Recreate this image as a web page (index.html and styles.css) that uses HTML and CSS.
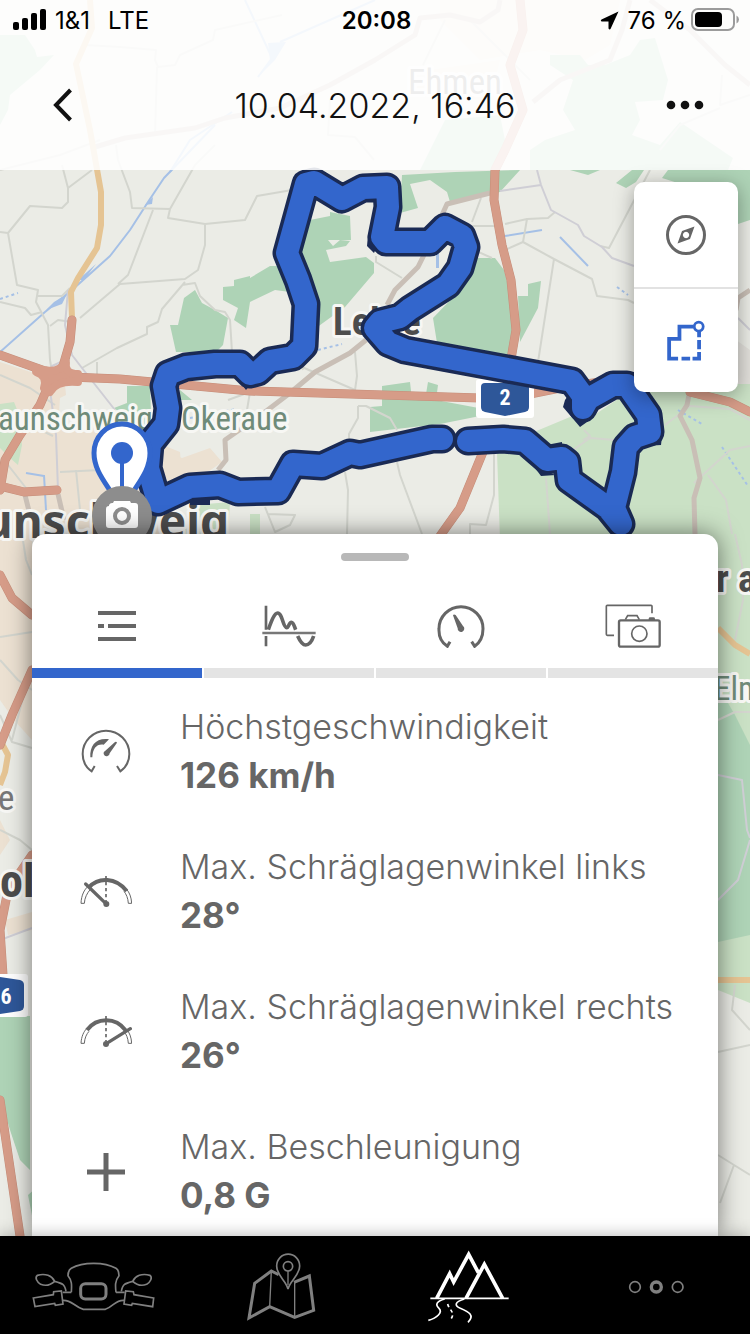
FILE: index.html
```html
<!DOCTYPE html>
<html lang="de">
<head>
<meta charset="utf-8">
<meta name="viewport" content="width=device-width, initial-scale=1">
<title>10.04.2022, 16:46</title>
<link rel="stylesheet" href="styles.css">
</head>
<body>
<div class="screen">
  <svg class="map" viewBox="0 0 750 1334" preserveAspectRatio="xMidYMin slice" role="img" aria-label="Karte mit aufgezeichneter Route">
    <!-- settlements -->
    <g class="town">
      <path d="M0 362 L40 375 L65 385 L66 395 L60 398 L58 428 L85 432 L88 415 L120 440 L150 440 L180 452 L182 474 L160 480 L160 534 L0 540Z"/>
      <path d="M162 450 L182 458 L210 448 L222 462 L205 474 L168 484Z"/>
      <path d="M0 534 L32 534 V740 L14 720 L0 700Z"/>
      <path d="M0 820 L10 840 L0 855Z M5 920 L32 912 V930 L8 935Z"/>
      <path d="M440 0 L620 0 L610 45 L585 60 L540 50 L480 60 L440 20Z M430 70 L500 60 L490 100 L410 96Z"/>
      <path d="M718 400 L735 385 L750 384 V350 L736 340Z" class="built"/>
    </g>
    <!-- light woodland -->
    <g class="wood-light">
      <path d="M534 432 L570 417 L590 418 L640 384 L750 384 V540 H500 L497 452Z"/>
      <path d="M195 505 L230 502 L228 534 H180Z M250 514 h10 v20 h-10Z"/>
      <path d="M0 404 L14 402 L18 412 L22 445 L18 465 L10 458 L0 448Z"/>
      <path d="M700 534 H750 V1003 L718 990Z"/>
    </g>
    <!-- woodland -->
    <g class="wood">
      <path d="M0 35 L25 35 L35 50 L37 57 L54 55 L40 70 L10 95 L8 110 L0 125Z"/>
      <path d="M550 55 L580 55 L588 65 L605 65 L630 55 L640 40 L655 38 L668 80 L663 100 L635 102 L640 120 L632 135 L660 145 L680 122 L733 158 L728 170 H530 V150 L545 140 L575 130 L563 110 L573 80 L550 65Z"/>
      <path d="M445 120 L500 115 L505 140 L498 170 H420 L430 150Z"/>
      <path d="M170 325 L178 325 L184 298 L195 290 L202 303 L215 310 L228 318 L223 345 L216 352 H176Z"/>
      <path d="M223 287 L234 286 V280 L250 276 V302 L246 328 L234 320 L238 308 L223 300Z"/>
      <path d="M250 278 L270 266 L292 266 L310 220 L330 216 V212 L350 216 L351 240 L328 240 L333 246 L340 240 L350 241 L346 246 L326 250 L330 262 L366 257 L374 263 L374 273 L345 307 L316 328 L305 322 L290 292 L275 290 L250 302Z"/>
      <path d="M127 386 L150 386 L152 440 L130 420 L114 408 L127 403Z M180 390 L192 400 L180 400Z"/>
      <path d="M402 175 L455 172 L520 170 L500 192 L450 202 L447 192 L430 180 L410 184 L418 208 L400 213Z"/>
      <path d="M475 258 L495 258 L504 270 L512 300 L512 356 L500 360 L437 343 L433 318 L460 290Z M518 296 L528 296 L528 284 L541 281 L538 308 L520 342Z"/>
      <path d="M382 386 L410 382 L412 400 L425 400 L428 382 L438 385 L436 400 L500 412 L485 415 L440 424 L370 432 L370 407 L382 406Z"/>
      <path d="M616 183 L632 170 L644 170 L636 182 L626 188Z M570 170 H600 L588 175Z M662 178 L668 170 H750 V220 L738 224 L700 190Z"/>
      <path d="M718 686 L735 715 L750 745 V935 L718 942Z"/>
      <path d="M0 1016 L30 1016 V1170 L20 1160 L10 1130 L0 1096Z M28 1195 L36 1188 V1236Z"/>
    </g>
    <!-- water -->
    <g class="water">
      <path d="M0 352 L45 312 L72 290 L110 256 L130 230 L148 202 L164 178 L215 125"/>
      <path d="M170 172 L190 140 L232 112 M258 77 L272 58 L245 0 M280 42 L375 0 M560 237 L588 266 M26 473 L44 476 M44 475 L46 510 M505 236 L542 230"/>
      <path class="dashed" d="M722 447 L748 486 M678 410 L702 424 M318 350 L342 344 M0 299 L18 293 M617 287 L628 295 M190 418 L236 409"/>
      <path class="fill" d="M268 43 L286 42 L275 60 L258 77 L270 60Z M54 302 L67 294 L62 304 L46 310Z M145 205 L153 197 L152 204Z M78 280 L96 264 L84 280Z M436 252 h3 v16 h-3Z"/>
    </g>
    <!-- minor roads -->
    <g class="lane">
      <path d="M0 232 L8 233 L30 206 L62 208 L68 202 V188 L92 170 M68 188 L62 165 M8 233 L17 285 L38 290 L36 302 L48 325 L50 360 L52 372 M38 296 L62 296 L70 288 M0 302 L25 308 L31 315 L42 312 M50 326 L58 320 L72 322"/>
      <path d="M80 318 L120 284 L185 279 L198 270 L205 245 V224 L168 218 L170 209 L132 208 L130 192 L118 160 L116 145 M170 209 L195 165 L215 145 M205 224 L245 220 L257 196 L292 190 M153 210 L128 275 L118 284 M185 282 L162 309 L158 322 L147 327 V334 L117 348 L82 368 M97 362 V375 M182 285 L195 283 L200 296 L215 310 L225 312 L230 320 L232 352"/>
      <path d="M0 375 L30 388 L55 405 M30 425 L53 436 M60 472 L100 470 M76 470 L80 510 M8 465 L26 488 M228 400 L250 392 L247 410"/>
      <path d="M376 256 L376 262 L402 278 M303 370 L302 367 L355 390 L357 376 L355 352 M358 406 L366 406 L390 418 L397 430 M358 406 L358 418 L349 434 V442 M345 472 L348 490 L347 534 M397 462 L400 475 L422 534 M265 507 L275 532 L290 525 L295 515 L268 514 M494 450 V495 L486 525 L470 524 V534 M470 226 L495 226 M472 222 L481 198 M474 250 L492 258"/>
      <path d="M505 224 L527 219 L548 218 L555 212 M527 219 L523 242 L505 250 M523 242 L554 259 L592 279 L597 296 L628 300 L634 303 M554 259 L538 362 M600 246 L609 248 L650 170 M583 440 L590 436 L584 430 M573 450 L590 438 L615 440 M546 478 L550 534 M665 425 L690 406 L730 409 L750 420 M694 483 L730 450 L750 446 M708 475 L726 500 L732 534"/>
      <path d="M85 45 L120 47 L156 50 L155 60 L158 67 L175 65 L180 55 L213 40 L215 30 L282 15 M0 170 L60 155 L100 140 M157 67 L155 135 M330 100 L328 135 L355 137 L374 160 M423 65 L445 20 M470 20 L510 60 L530 80 M722 75 L720 105 L750 95 M660 150 L680 125 L720 108"/>
      <path d="M22 534 L26 560 L32 575 M0 660 L18 680 L32 690 M0 637 L32 632 M0 715 L12 742 L32 748 M0 830 L20 840 L32 850 M12 740 L25 690 M735 534 L742 565 L743 600 L735 640 M718 720 L735 712 H750 M735 985 L732 1010 L750 1030 M718 1052 L750 1045 M718 1155 L734 1165 L720 1203 M734 1165 L750 1175"/>
    </g>
    <g class="lane lilac">
      <path d="M500 191 L541 185 L551 210 L578 225 L584 236 L602 247 L612 258 L634 266 M541 185 L537 170 M738 318 L750 330 M68 290 L65 325 L72 355 L82 368 L115 410 M70 358 L52 366 L50 390 L56 435 L58 490 M718 775 L742 780 L747 830 L750 838 M750 840 L738 880 L718 900 M0 940 L32 928"/>
    </g>
    <!-- district roads -->
    <g class="road">
      <path d="M95 147 L125 138 L195 128 L225 118 L280 108 L330 85 L375 60 L415 35 L420 18 L450 15 L480 22 L498 10 L500 0 M533 102 L560 80 L610 60 L622 30 L630 0 M650 0 L690 30 L725 65 L750 85"/>
      <path d="M490 193 L447 204 L442 215 M424 255 L418 267 L395 290 L387 305 M366 340 L350 353 L315 372 L290 393 L265 412 L225 440 L226 460 L218 470 M690 390 L687 405 L680 416 L692 440 L700 478 L694 498 L695 534 M750 290 L738 298 L736 310 M25 495 L30 515 M58 494 L64 520"/>
    </g>
    <g class="main">
      <path d="M90 0 L92 28 L76 64 L90 130 L101 192 V225 L97 248 L78 278 L71 292 L72 318"/>
      <path d="M718 628 L735 645 L750 654 M718 980 H750 M0 740 L8 755 L5 772 L0 785"/>
    </g>
    <g class="motorway-edge">
      <path d="M0 355 L45 371 L70 377 L120 379 L250 391 L480 398 M525 395 L560 388 L640 376 M690 392 L730 402 L750 412"/>
      <path d="M72 320 L70 342 L63 366 L50 382 L40 405 L20 435 L5 460 L0 490 M0 486 L24 492 L57 490 M520 0 L523 30 L510 65 L523 110 L505 150 L495 170 L494 200 L502 245 L511 280 L516 330 L510 365 M492 430 L460 508 L440 536"/>
      <path d="M0 575 L12 598 L32 615 M32 670 L12 715 L0 745 M32 855 L8 890 L0 930 L3 975 M0 1100 L20 1236"/>
    </g>
    <g class="motorway">
      <path d="M0 355 L45 371 L70 377 L120 379 L250 391 L480 398 M525 395 L560 388 L640 376 M690 392 L730 402 L750 412"/>
      <path d="M72 320 L70 342 L63 366 L50 382 L40 405 L20 435 L5 460 L0 490 M0 486 L24 492 L57 490 M520 0 L523 30 L510 65 L523 110 L505 150 L495 170 L494 200 L502 245 L511 280 L516 330 L510 365 M492 430 L460 508 L440 536"/>
      <path d="M0 575 L12 598 L32 615 M32 670 L12 715 L0 745 M32 855 L8 890 L0 930 L3 975 M0 1100 L20 1236"/>
      <path class="junction" d="M66 362 Q64 374 78 374 V382 Q56 380 50 392 L44 388 Q48 376 36 372 V368 Q58 376 66 362Z"/>
    </g>
    <!-- place names -->
    <g class="place">
      <text x="408" y="94" class="village">Ehmen</text>
      <text x="-2" y="430" class="nature">aunschweiger</text>
      <text x="181" y="430" class="nature">Okeraue</text>
      <text x="229" y="538" class="city wide" text-anchor="end">unschweig</text>
      <text x="333" y="335" class="suburb">Lehre</text>
      <text x="716" y="592" class="suburb">r a</text>
      <text x="714" y="700" class="nature">Elm</text>
      <text x="-2" y="810" class="village">e</text>
      <text x="0" y="897" class="city">ol</text>
    </g>
    <!-- motorway shields -->
    <g>
      <rect class="shield-back" x="476" y="379" width="58" height="39" rx="3"/>
      <path class="shield" d="M485 383 H525 Q529 383 529 387 V407 Q529 411 525 412 L505 416 L485 412 Q481 411 481 407 V387 Q481 383 485 383Z"/>
      <text x="505" y="405" class="shield-text" text-anchor="middle">2</text>
      <rect class="shield-back" x="-30" y="974" width="58" height="43" rx="3"/>
      <path class="shield" d="M0 977 L20 980 Q24 981 24 985 V1006 Q24 1010 20 1011 L0 1014Z"/>
      <text x="6" y="1004" class="shield-text" text-anchor="middle">6</text>
    </g>
    <!-- recorded route -->
    <path class="route-edge" d="M442 439 L432 439 L360 455 L350 453 L322 466 L293 464 L278 491 L238 492 L220 485 L190 487 L158 502 L148 468 L150 444 L166 424 L168 408 L164 386 L168 374 L186 367 L215 364 L240 364 L250 374 L258 372 L270 361 L293 357 L304 346 L306 304 L298 280 L287 253 L306 184 L314 182 L342 199 L363 188 L387 187 L388 207 L382 237 L386 242 L430 242 L445 227 L462 236 L466 247 L460 268 L448 285 L410 309 L400 317 L380 322 L375 328 L388 343 L405 350 L572 381 L583 396 L583 408 L588 399 L613 385 L627 385 L648 415 L650 432 L635 437 L626 447 L623 472 L614 508 L621 524 L608 508 L569 480 L567 462 L562 458 L547 460 L525 441 L503 439 L468 441"/>
    <path class="route-notch" d="M575 386 L565 400 L563 407 L580 427 L594 417 L594 410Z M612 372 H630 V378 L612 382Z M655 408 L663 427 L661 445 L645 446Z M190 500 V505 L210 505 V495Z M541 446 L562 442 L562 450 L548 456Z M535 468 L541 476 L556 475Z M368 235 L367 246 L374 253 L380 240Z M378 175 L384 174 L384 180 L400 188 L390 195Z M236 377 L246 390 L254 380Z M470 240 L479 246 L477 238Z"/>
    <path class="route" d="M442 439 L432 439 L360 455 L350 453 L322 466 L293 464 L278 491 L238 492 L220 485 L190 487 L158 502 L148 468 L150 444 L166 424 L168 408 L164 386 L168 374 L186 367 L215 364 L240 364 L250 374 L258 372 L270 361 L293 357 L304 346 L306 304 L298 280 L287 253 L306 184 L314 182 L342 199 L363 188 L387 187 L388 207 L382 237 L386 242 L430 242 L445 227 L462 236 L466 247 L460 268 L448 285 L410 309 L400 317 L380 322 L375 328 L388 343 L405 350 L572 381 L583 396 L583 408 L588 399 L613 385 L627 385 L648 415 L650 432 L635 437 L626 447 L623 472 L614 508 L621 524 L608 508 L569 480 L567 462 L562 458 L547 460 L525 441 L503 439 L468 441"/>
    <!-- start pin and photo marker -->
    <path class="pin" d="M122 518 C118 492 94 478 94 453 A28 29 0 0 1 150 453 C150 478 126 492 122 518Z"/>
    <path class="pin-stem" d="M122 453 V490"/>
    <circle class="pin-dot" cx="122" cy="453" r="11"/>
    <circle class="photo" cx="122" cy="516" r="30"/>
    <path class="photo-camera" d="M109 505 q1 -2 3 -2 h1 l1 -2 h16 l1 2 h4 q3 0 3 3 v19 q0 3 -3 3 h-26 q-3 0 -3 -3 v-16 q0 -3 3 -3Z"/>
    <circle class="photo-lens" cx="122" cy="516" r="7"/>
  </svg>

  <header class="top">
    <div class="status">
      <div class="status-left">
        <svg width="34" height="22" viewBox="0 0 34 22" aria-hidden="true"><rect x="0" y="13" width="6" height="8" rx="2"/><rect x="9" y="9" width="6" height="12" rx="2"/><rect x="18" y="4" width="6" height="17" rx="2"/><rect x="27" y="0" width="6" height="21" rx="2"/></svg>
        <span>1&amp;1</span>
        <span class="network">LTE</span>
      </div>
      <time class="clock">20:08</time>
      <div class="status-right">
        <svg class="location" width="19" height="19" viewBox="0 0 19 19" aria-hidden="true"><path d="M18.500 .5 L10.500 18 Q9.500 19 8.500 17.500 V10.500 H1.500 Q0 9.500 1.500 8.500Z"/></svg>
        <span>76 %</span>
        <svg width="49" height="24" viewBox="0 0 49 24" aria-hidden="true"><rect x="1" y="1" width="42" height="21" rx="6" fill="none" stroke="#9b9b9b" stroke-width="2"/><rect x="4" y="4" width="27" height="15" rx="4"/><path d="M45.500 7.500 Q48 9 48 11.500 T45.500 15.500Z" fill="#9b9b9b"/></svg>
      </div>
    </div>
    <div class="titlebar">
      <button class="plain" type="button" aria-label="Zurück"><svg width="38" height="34" viewBox="0 0 38 34"><path d="M24.500 2 L10 17 L24.500 32" fill="none" stroke="#111" stroke-width="4"/></svg></button>
      <h1>10.04.2022, 16:46</h1>
      <button class="plain more" type="button" aria-label="Mehr"><svg width="38" height="34" viewBox="0 0 38 34" fill="#111"><circle cx="5" cy="17" r="4.300"/><circle cx="19" cy="17" r="4.300"/><circle cx="33" cy="17" r="4.300"/></svg></button>
    </div>
  </header>

  <div class="tools">
    <button type="button" aria-label="Kompass">
      <svg width="42" height="42" viewBox="0 0 42 42"><circle cx="21" cy="21" r="18.500" fill="none" stroke="#666" stroke-width="3"/><path fill="#666" fill-rule="evenodd" d="M29.500 12.500 L25 25 L12.500 29.500 L17 17Z M21 17.800 a3.200 3.200 0 1 0 .1 0Z"/></svg>
    </button>
    <button type="button" aria-label="Route anzeigen">
      <svg width="40" height="42" viewBox="498 450 114 122" fill="none" stroke="#3366cc" stroke-width="11"><path d="M577 469 H536 V505 H506 V562 H532 M542 562 H567 M574 562 H593 V543 M593 535 V508 M593 500 V485"/><circle cx="592" cy="469" r="13" stroke-width="8"/></svg>
    </button>
  </div>

  <main class="sheet">
    <button class="handle" type="button" aria-label="Ansicht verschieben"></button>
    <div class="tabs" role="tablist">
      <button class="tab active" role="tab" aria-selected="true" type="button" aria-label="Übersicht">
        <svg width="38" height="30" viewBox="0 0 38 30" stroke="#666" stroke-width="4"><path d="M0 2 H38 M0 15 H6 M10 15 H38 M0 28 H38"/></svg>
      </button>
      <button class="tab" role="tab" aria-selected="false" type="button" aria-label="Verlauf">
        <svg width="54" height="42" viewBox="695 225 162 126" fill="none" stroke="#666"><path stroke-width="8" d="M707 227 V299 M707 318 V349"/><path stroke-width="8" stroke="#777" d="M696 309 H856"/><path stroke-width="11" d="M714 299 C722 276 732 249 742 249 C756 249 758 293 769 293 C775 293 776 277 783 277 C790 277 792 290 796 299 M802 318 C810 336 818 345 826 345 C836 345 845 333 850 318"/></svg>
      </button>
      <button class="tab" role="tab" aria-selected="false" type="button" aria-label="Geschwindigkeit">
        <svg width="50" height="44" viewBox="197 222 150 132" fill="none" stroke="#666"><path stroke-width="9" d="M239 335 L231 349 C211 336 205 315 206 296 A66 66 0 0 1 338 296 C338 315 331 336 313 349 L304 335"/><path fill="#666" stroke="none" d="M248 256 Q250 251 256 255 L278 288 A10 10 0 1 1 262 295Z"/></svg>
      </button>
      <button class="tab" role="tab" aria-selected="false" type="button" aria-label="Fotos">
        <svg width="56" height="44" viewBox="702 220 168 132" fill="none" stroke="#666" stroke-width="5"><path d="M729 314 H709 Q706 314 706 311 V227 Q706 224 709 224 H840 Q843 224 843 227 V248"/><rect x="744" y="269" width="122" height="79" rx="5" stroke-width="7"/><path stroke-width="5" d="M763 267 L770 255 H798 L805 267"/><circle cx="805" cy="309" r="23"/><path fill="#666" stroke="none" d="M833 268 V264 Q833 260 838 260 H847 Q852 260 852 264 V268Z"/></svg>
      </button>
    </div>
    <dl class="stats">
      <div class="stat">
        <svg width="52" height="46" viewBox="62 90 156 138" fill="none" stroke="#666"><path stroke-width="6" d="M106 201 L97 217 C78 204 70 185 70 165 A70 70 0 0 1 210 165 C210 185 201 204 183 217 L173 201"/><path fill="#666" stroke="none" d="M93 175 C91 140 110 116 149 121 L133 137 C112 134 100 148 99 175Z M167 129 Q171 126 173 131 L151 163 A9 9 0 1 1 138 155Z"/></svg>
        <dt>Höchstgeschwindigkeit</dt>
        <dd>126 km/h</dd>
      </div>
      <div class="stat">
        <svg width="52" height="34" viewBox="61 528 156 102" fill="none" stroke="#666"><path stroke-width="3" d="M64 613 H74 C75 596 82 583 92 571 M64 613 C65 588 74 572 85 562 M216 613 H206 C205 597 200 586 193 577 M216 613 C215 594 209 580 201 571"/><path stroke-width="12" d="M88 565 C116 534 168 534 201 576"/><path stroke-width="10" stroke-linecap="round" d="M78 555 L138 613"/><circle cx="140" cy="615" r="9" fill="#666" stroke="none"/><path stroke-width="5" stroke-dasharray="10 8" d="M139 531 V606"/></svg>
        <dt>Max. Schräglagenwinkel links</dt>
        <dd>28°</dd>
      </div>
      <div class="stat">
        <svg width="52" height="34" viewBox="61 528 156 102" fill="none" stroke="#666"><path stroke-width="3" d="M64 613 H74 C75 596 81 585 88 577 M64 613 C65 592 73 577 80 570 M216 613 H206 C205 597 200 586 193 577 M216 613 C215 594 209 580 201 571"/><path stroke-width="12" d="M82 573 C112 534 168 534 198 574"/><path stroke-width="10" stroke-linecap="round" d="M212 569 L141 613"/><circle cx="139" cy="615" r="9" fill="#666" stroke="none"/><path stroke-width="5" stroke-dasharray="10 8" d="M139 531 V606"/></svg>
        <dt>Max. Schräglagenwinkel rechts</dt>
        <dd>26°</dd>
      </div>
      <div class="stat">
        <svg width="40" height="40" viewBox="0 0 40 40" stroke="#666" stroke-width="5"><path d="M20 1 V39 M1 20 H39"/></svg>
        <dt>Max. Beschleunigung</dt>
        <dd>0,8 G</dd>
      </div>
    </dl>
  </main>

  <nav class="bottom" aria-label="Hauptnavigation">
    <a href="#bike" aria-label="Motorrad">
      <svg width="123" height="51" viewBox="98 92 369 153" fill="none" stroke="#808080" stroke-width="5"><path d="M216 186 C217 166 219 152 206 136 C206 124 209 118 216 114 C250 94 316 94 350 114 C357 118 359 124 359 136 C346 152 348 168 350 186 M216 186 H190 M350 186 H376 M190 210 C218 208 222 228 252 237 H318 C344 228 348 208 374 210"/><rect x="244" y="160" width="76" height="46" rx="14" stroke-width="9"/><path d="M102 203 L162 193 L163 184 L186 182 L191 221 L168 225 L166 219 L107 229Z M463 203 L404 193 L402 184 L379 182 L374 221 L397 225 L399 219 L460 229Z M200 183 C196 162 192 160 166 153 M366 183 C370 162 374 160 400 153 M166 153 C158 136 138 128 114 135 C106 142 112 154 124 162 C140 168 154 164 166 153Z M400 153 C408 136 428 128 452 135 C460 142 454 154 442 162 C426 168 412 164 400 153Z"/></svg>
    </a>
    <a href="#map" aria-label="Karte">
      <svg width="71" height="69" viewBox="740 64 213 207" fill="none" stroke="#808080"><path stroke-width="9" d="M838 132 L816 121 L766 158 L749 262 L811 228 L886 260 L943 239 L930 136 L884 155"/><path stroke-width="4" d="M816 121 L811 228 M886 156 V260 M866 121 V164"/><path stroke-width="5" d="M866 175 C860 150 832 134 832 106 A34 35 0 0 1 901 106 C901 134 872 150 866 175Z"/><circle cx="866" cy="107" r="14" stroke-width="5"/></svg>
    </a>
    <a href="#trips" aria-label="Touren" aria-current="page">
      <svg width="83" height="74" viewBox="160 64 249 222" fill="none" stroke="#fff"><path stroke-width="11" d="M189 209 L228 135 L240 160 L285 77 L314 132 M277 209 L332 107 L387 209"/><path stroke-width="5" d="M170 209 H405"/><path stroke-width="5" d="M213 211 C188 218 184 228 196 239 C208 251 190 268 164 275 M272 211 C243 220 241 230 260 239 C286 250 304 260 283 281"/><path stroke-width="5" stroke-dasharray="10 9" d="M222 226 C226 244 248 252 230 273"/></svg>
    </a>
    <a href="#more" aria-label="Weitere">
      <svg width="57" height="16" viewBox="756 146 171 48" fill="none" stroke="#808080"><circle cx="777" cy="170" r="16" stroke-width="5"/><circle cx="841" cy="170" r="15" stroke-width="10"/><circle cx="905" cy="170" r="16" stroke-width="5"/></svg>
    </a>
  </nav>
</div>
</body>
</html>
```

FILE: styles.css
```css
* { box-sizing: border-box; }

body {
  margin: 0;
  font-family: Inter, "Liberation Sans", sans-serif;
  color: #666;
}

button {
  margin: 0;
  padding: 0;
  border: 0;
  background: none;
  font: inherit;
  color: inherit;
}

svg { display: block; flex: none; }

.screen {
  position: relative;
  display: flex;
  flex-direction: column;
  min-height: 100vh;
  overflow: hidden;
}

/* map */
.map {
  position: absolute;
  inset: 0;
  width: 100%;
  height: 100%;
  background: #ebece6;
}
.map path { stroke-linejoin: round; }
.town { fill: #ece1d2; }
.town .built { fill: #e2e0db; }
.wood { fill: #aed3b6; }
.wood-light { fill: #cae1c5; }
.water { fill: none; stroke: #a5c0e6; stroke-width: 2; }
.water .fill { fill: #a5c0e6; stroke: none; }
.water .dashed { stroke-dasharray: 3 3; }
.lane { fill: none; stroke: #d3d5ce; stroke-width: 2; }
.lane.lilac { stroke: #cfced5; }
.road { fill: none; stroke: #c9bfb6; stroke-width: 5; }
.main { fill: none; stroke: #e5c493; stroke-width: 6; }
.motorway { fill: none; stroke: #d69c88; stroke-width: 8; stroke-linecap: round; }
.motorway-edge { fill: none; stroke: #c58d79; stroke-width: 9; stroke-linecap: round; }
.junction { fill: #d69c88; }
.route-edge { fill: none; stroke: #1a2a54; stroke-width: 29; stroke-linecap: round; }
.route { fill: none; stroke: #3366cc; stroke-width: 22; stroke-linecap: round; }
.route-notch { fill: #1a2a54; }

.place {
  font-family: "Roboto Condensed", Roboto, "Noto Sans", sans-serif;
  paint-order: stroke;
  stroke: #f7f7f4;
  stroke-width: 6;
  stroke-linejoin: round;
}
.nature { font-size: 33px; fill: #6f8b79; }
.village { font-size: 35px; fill: #777; }
.city { font-size: 46px; font-weight: 700; fill: #4d4d4d; }
.city.wide { font-family: "Noto Sans", sans-serif; }
.suburb { font-size: 39px; font-weight: 700; fill: #4d4d4d; }
.shield-back { fill: #fff; }
.shield { fill: #2e5799; }
.shield-text { font: 700 22px "Roboto Condensed", Roboto, "Noto Sans", sans-serif; fill: #fff; }

.pin { fill: #fff; stroke: #3366cc; stroke-width: 5; }
.pin-stem { stroke: #3366cc; stroke-width: 4; }
.pin-dot { fill: #3366cc; }
.photo { fill: #8d8d8d; }
.photo-camera { fill: #fff; }
.photo-lens { fill: #fff; stroke: #8d8d8d; stroke-width: 4; }

/* header */
.top {
  position: relative;
  background: rgba(255, 255, 255, .88);
  color: #000;
}
.status {
  display: grid;
  grid-template-columns: 1fr auto 1fr;
  align-items: center;
  height: 40px;
  padding: 0 10px 0 13px;
  font-size: 24px;
}
.status-left, .status-right { display: flex; align-items: center; gap: 8px; }
.status-right { justify-content: flex-end; gap: 5px; }
.location { margin-right: 4px; }
.network { margin-left: 10px; }
.clock { font-weight: 600; }
.titlebar {
  display: grid;
  grid-template-columns: 1fr auto 1fr;
  align-items: center;
  height: 130px;
  padding: 0 46px;
}
.titlebar h1 { margin: 0; font-size: 34px; font-weight: 300; color: #111; }
.plain { justify-self: start; }
.plain.more { justify-self: end; }

/* map tools */
.tools {
  position: relative;
  align-self: flex-end;
  display: grid;
  grid-template-rows: 1fr 1fr;
  width: 104px;
  height: 210px;
  margin: 12px 12px 142px;
  border-radius: 10px;
  background: #fff;
  box-shadow: 0 4px 20px rgba(0, 0, 0, .35);
}
.tools button { display: grid; place-items: center; }
.tools button + button { border-top: 2px solid #e2e2e2; }

/* sheet */
.sheet {
  position: relative;
  flex: 1;
  margin: 0 32px;
  padding-top: 19px;
  border-radius: 14px 14px 0 0;
  background: #fff;
  box-shadow: 0 0 24px rgba(0, 0, 0, .5);
}
.handle {
  display: block;
  width: 68px;
  height: 8px;
  margin: 0 auto 23px;
  border-radius: 4px;
  background: #b8b8b8;
}
.tabs {
  display: grid;
  grid-template-columns: repeat(4, 1fr);
  gap: 2px;
}
.tab {
  display: grid;
  place-items: center;
  height: 94px;
  border-bottom: 10px solid #e4e4e4;
}
.tab.active { border-color: #3366cc; }

.stats {
  display: flex;
  flex-direction: column;
  gap: 42px;
  margin: 0;
  padding: 24px 16px 14px 48px;
}
.stat {
  display: grid;
  grid-template-columns: 52px 1fr;
  grid-template-rows: 48px 50px;
  column-gap: 48px;
  align-items: center;
}
.stat svg { grid-row: 1 / 3; align-self: center; justify-self: center; margin-top: 2px; }
.stat dt, .stat dd { grid-column: 2; margin: 0; }
.stat dt { font-size: 34px; font-weight: 300; }
.stat dd { font-size: 35px; font-weight: 700; }

/* bottom navigation */
.bottom {
  position: relative;
  display: grid;
  grid-template-columns: repeat(4, 1fr);
  height: 98px;
  padding-top: 3px;
  background: #000;
  box-shadow: 0 -2px 14px rgba(0, 0, 0, .25);
}
.bottom a { display: grid; place-items: center; }
```
